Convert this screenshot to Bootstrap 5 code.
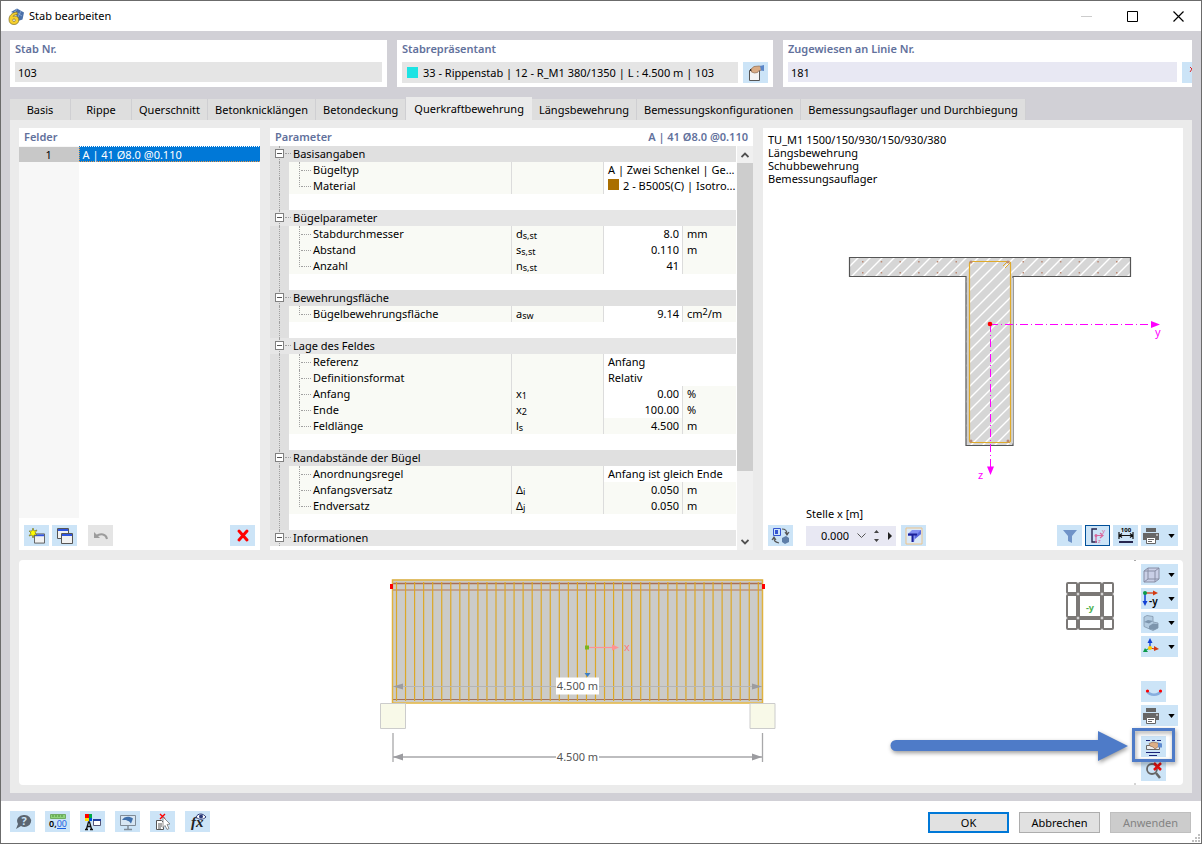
<!DOCTYPE html>
<html lang="de">
<head>
<meta charset="utf-8">
<meta name="viewport" content="width=device-width, initial-scale=1">
<title>Stab bearbeiten</title>
<link rel="stylesheet" href="https://cdn.jsdelivr.net/npm/bootstrap@5.3.0/dist/css/bootstrap.min.css">
<style>
:root { --frame:#d1d0d6; --page:#ebebeb; --tool:#cce4f7; --head:#62719c; --cell:#f9faf5; --rule:#dcdcdc; }
body { font-family:"Noto Sans","Open Sans",sans-serif; font-size:11px; line-height:16px; color:#000; background:#fff; }
.dialog { min-height:100vh; border:1px solid #6b6b6b; }
.titlebar { height:30px; padding-left:7px; }
.wbtn { width:46px; height:30px; border:0; background:none; padding:0; }
.frame { background:var(--frame); padding:9px 9px 8px; }
.groups { display:grid; grid-template-columns:377fr 376fr 409fr; gap:10px; }
.group { background:#fff; height:47px; padding:1px 5px 0; overflow:hidden; }
.group-row { display:flex; gap:5px; margin-top:5px; }
.caption { color:var(--head); font-weight:600; line-height:16px; display:block; }
.field { border:0; border-radius:0; background:#e5e5e5; height:20px; padding:0 3px; font-size:11px; color:#000; flex:1 1 auto; min-width:0; width:100%; }
.line-field { background:#e8e8f3; }
.field-box { background:#e5e5e5; height:21px; padding-left:5px; }
.tool { width:25px; height:21px; border:0; padding:0; background:var(--tool); display:inline-flex; align-items:center; justify-content:center; flex:none; }
.tool-drop { width:37px; justify-content:flex-start; padding-left:1px; gap:8px; }
.tool-cut { width:10px; justify-content:flex-end; }
.tool svg { flex:none; overflow:visible; }
.tool:disabled { background:#e5e5e5; }
.tool-on { outline:1px solid #00509a; outline-offset:-1px; }
.tabs { margin-top:10px; height:23px; }
.tab-item { border:0; border-right:1px solid #cfcfd2; background:#dedede; height:21px; padding:0 7px; min-width:61px; line-height:22px; white-space:nowrap; color:#000; }
.tab-item.active { background:var(--page); height:23px; border:0; line-height:24px; padding:0 8px; }
.content { background:var(--page); padding:8px 9px; gap:10px; }
.upper { display:grid; grid-template-columns:241fr 483fr 420fr; gap:10px; flex:422 1 422px; min-height:0; }
.lower { flex:225 1 225px; border-radius:4px; background:#fff; position:relative; }
.pane { background:#fff; min-width:0; min-height:0; overflow:hidden; }
.pane-head { height:18px; line-height:18px; padding:0 5px; }
.pane-tools { display:flex; align-items:flex-end; padding:0 5px 4px; gap:3px; }
.fields-list { flex:1 1 0; margin-bottom:7px; background:linear-gradient(90deg,#f7f7f7 60px,#fff 60px); }
.fields-list th { width:60px; background:#c8c8c8; font-weight:400; text-align:center; height:15px; line-height:15px; padding:0; }
.fields-list td { background:#0078d7; color:#fff; padding:0 0 0 3px; line-height:13px; border:1px dotted #e79746; border-top-color:#0078d7; border-right:0; }
.sheet { width:100%; table-layout:fixed; border-collapse:separate; border-spacing:0; }
.sheet td, .sheet th { padding:0; height:16px; line-height:16px; font-weight:400; white-space:nowrap; }
.sheet sub { font-size:9px; bottom:-1px; line-height:0; }
.sheet sup { font-size:9px; line-height:0; top:-3px; }
.sheet .gut { background:#dfdfdf; position:relative; }
.sheet .gut::before { content:""; position:absolute; left:9px; top:0; bottom:0; border-left:1px dotted #a0a0a0; }
.sheet .sec th { background:#e0e0e0; padding-left:4px; text-align:left; position:relative; }
.sheet .alt th, .sheet .alt .gut { background:#e6e6e6; }
.sheet .sec th::before { content:""; position:absolute; left:-4px; width:6px; top:7px; border-top:1px dotted #a0a0a0; }
.fold { position:absolute; left:5px; top:3px; width:9px; height:9px; border:1px solid #808080; background:#fff; padding:0; }
.fold::after { content:""; position:absolute; left:1px; right:1px; top:3px; height:1px; background:#555; }
.sheet .nm { background:var(--cell); padding-left:24px; position:relative; border-right:1px solid var(--rule); }
.sheet .nm::before { content:""; position:absolute; left:10px; top:0; height:16px; border-left:1px dotted #a0a0a0; }
.sheet .nm::after { content:""; position:absolute; left:12px; width:10px; top:8px; border-top:1px dotted #a0a0a0; }
.sheet .end .nm::before { height:9px; }
.sheet .sy { background:var(--cell); padding-left:4px; border-right:1px solid var(--rule); }
.sheet .va { text-align:right; padding-right:3px; border-right:1px solid var(--rule); }
.sheet .ro { background:var(--cell); }
.sheet .tx { padding-left:4px; }
.sheet .un { background:var(--cell); padding-left:4px; }
.swatch { display:inline-block; width:11px; height:11px; flex:none; }
.swatch-cyan { background:#1ce3e3; margin-right:2px; }
.swatch-brown { background:#aa6f00; margin-right:4px; }
.scroll { width:16px; background:#f0f0f0; margin-left:1px; flex:none; }
.scroll button { height:17px; width:16px; border:0; background:none; padding:0; display:flex; align-items:center; justify-content:center; }
.thumb { background:#cdcdcd; flex:308 1 0; }
.rest { flex:62 1 0; }
.legend-lines { line-height:13px; padding:5px 5px 0; }
.spin { background:#e8e8f3; height:20px; width:90px; }
.spin input { border:0; background:none; width:43px; text-align:right; padding:0; }
.spin button { border:0; background:none; padding:0; display:flex; }
.place { margin:0 2px 0 10px; }
.side { width:47px; padding:4px 0 4px 5px; gap:3px; }
.side .gap-before { margin-top:21px; }
.side .marked { margin-top:7px; position:relative; height:21px; width:25px; }
.ring { position:absolute; left:-9px; top:-8px; width:43px; height:34px; border:3px solid #4e7bc8; filter:drop-shadow(1px 2px 2px #0006); pointer-events:none; z-index:2; }
.pointer { position:absolute; right:53px; top:163px; width:244px; height:46px; pointer-events:none; }
.footer { height:42px; padding:10px 10px 0 9px; }
.push { width:81px; height:21px; border:1px solid #adadad; background:#e1e1e1; padding:0; line-height:19px; color:#000; }
.push-main { border:2px solid #0078d7; line-height:17px; }
.push:disabled { background:#ccc; border-color:#bfbfbf; color:#838383; }
svg { display:block; }
svg text { font-family:"Noto Sans","Open Sans",sans-serif; }
</style>
</head>
<body>
<svg width="0" height="0" class="position-absolute" aria-hidden="true">
  <symbol id="printer" viewBox="0 0 18 18"><path d="M4 1h10v4H4zM1 6h16v7h-3v-2H4v2H1z" fill="#666"/><path d="M4.500 10.500h9v6h-9z" fill="#fff" stroke="#666"/><path d="M6 12.500h6M6 14.500h4" stroke="#666"/><path d="M14 8h2" stroke="#fff"/></symbol>
  <symbol id="caret" viewBox="0 0 8 5"><path d="M0 0h8L4 5z" fill="#000"/></symbol>
  <symbol id="window" viewBox="0 0 12 11"><path d="M.500.500h11v10H.500z" fill="#f1f1f1" stroke="#555"/><path d="M1 1h10v2H1z" fill="#2f55e0"/></symbol>
</svg>

<div class="dialog d-flex flex-column">
  <header class="titlebar d-flex align-items-center">
    <svg width="17" height="17" viewBox="0 0 17 17"><path d="M3 4 9 .500l7 4-1.500 7L10 13 8 6z" fill="#4a70aa"/><path d="m6 3 8 5M9 1l-3 5M13 3l-3 6" stroke="#9bb8de" stroke-width=".7"/><path d="M9 4C3.500 4.500 1 8 1 11.500 1 14.800 3 16.500 6 16.500s4.800-1.800 4.800-4.600S9 8 6.700 8c-.6 0-1.200.1-1.700.4C5.600 7.300 7 6.600 9.500 6.400z" fill="#f7d02c" stroke="#7a6b2a" stroke-width=".7"/><circle cx="6" cy="12.200" r="1.300" fill="#fff" stroke="#7a6b2a" stroke-width=".7"/></svg>
    <span class="ms-1 flex-grow-1">Stab bearbeiten</span>
    <button class="wbtn" aria-label="Minimieren" disabled><svg class="mx-auto" width="11" height="11"><path d="M0 5.500h11" stroke="#ccc"/></svg></button>
    <button class="wbtn" aria-label="Maximieren"><svg class="mx-auto" width="11" height="11"><path d="M.500.500h10v10H.500z" fill="none" stroke="#000"/></svg></button>
    <button class="wbtn" aria-label="Schließen"><svg class="mx-auto" width="11" height="11"><path d="m.500.500 10 10m0-10-10 10" stroke="#000" stroke-width="1.200"/></svg></button>
  </header>

  <main class="frame d-flex flex-column flex-grow-1">
    <div class="groups">
      <div class="group">
        <label class="caption" for="nr">Stab Nr.</label>
        <div class="group-row"><input id="nr" class="field" value="103" readonly></div>
      </div>
      <div class="group">
        <label class="caption" for="rep">Stabrepräsentant</label>
        <div class="group-row">
          <div class="field-box d-flex align-items-center flex-grow-1"><span class="swatch swatch-cyan"></span><input id="rep" class="field" value="33 - Rippenstab | 12 - R_M1 380/1350 | L : 4.500 m | 103" readonly></div>
          <button class="tool" aria-label="Stabrepräsentant bearbeiten"><svg width="18" height="18"><path d="M2.500 6.500h10v10h-10z" fill="#f4f4f4" stroke="#555"/><path d="M3 5h4v2H3z" fill="#222"/><path d="M4 5 7 2.500l5-.5 2.500.500v3.500l-3 1-1 1.500-3 .500-3-1z" fill="#d9ab84" stroke="#7d5b40" stroke-width=".6"/><path d="m13 2 4-1v6l-3-.500z" fill="#5b86c8"/></svg></button>
        </div>
      </div>
      <div class="group pe-0">
        <label class="caption" for="linie">Zugewiesen an Linie Nr.</label>
        <div class="group-row">
          <input id="linie" class="field line-field" value="181" readonly>
          <button class="tool tool-cut" aria-label="Auswahl aufheben"><svg width="2" height="18"><path d="m0 3 2 2-2 3" fill="none" stroke="#e02020"/></svg></button>
        </div>
      </div>
    </div>

    <nav class="tabs d-flex align-items-end" role="tablist">
      <button class="tab-item" role="tab">Basis</button>
      <button class="tab-item" role="tab">Rippe</button>
      <button class="tab-item" role="tab">Querschnitt</button>
      <button class="tab-item" role="tab">Betonknicklängen</button>
      <button class="tab-item" role="tab">Betondeckung</button>
      <button class="tab-item active" role="tab" aria-selected="true">Querkraftbewehrung</button>
      <button class="tab-item" role="tab">Längsbewehrung</button>
      <button class="tab-item" role="tab">Bemessungskonfigurationen</button>
      <button class="tab-item" role="tab">Bemessungsauflager und Durchbiegung</button>
    </nav>

    <div class="content d-flex flex-column flex-grow-1">
      <div class="upper">
        <section class="pane d-flex flex-column">
          <div class="pane-head caption">Felder</div>
          <div class="fields-list"><table class="w-100"><tbody><tr><th>1</th><td>A | 41 Ø8.0 @0.110</td></tr></tbody></table></div>
          <div class="pane-tools">
            <button class="tool" aria-label="Neu"><svg width="18" height="18"><use href="#window" x="6" y="6" width="11" height="11"/><path d="m5 1 1 3 3-1-2 3 2 2-3 0-1 3-1-3-3 1 2-3-2-2 3 0z" fill="#fffb00" stroke="#77762b" stroke-width=".7"/></svg></button>
            <button class="tool" aria-label="Kopieren"><svg width="18" height="18"><use href="#window" x="1" y="1" width="12" height="11"/><use href="#window" x="5" y="6" width="12" height="11"/></svg></button>
            <button class="tool ms-2" disabled aria-label="Rückgängig"><svg width="18" height="18"><path d="M15 12c-1-5-6-6-11-3" fill="none" stroke="#9c9c9c" stroke-width="2"/><path d="M2 5v6h6z" fill="#9c9c9c"/></svg></button>
            <button class="tool ms-auto" aria-label="Löschen"><svg width="18" height="18"><path d="m5 4 8 9M13 4l-8 9" stroke="red" stroke-width="3" stroke-linecap="round"/></svg></button>
          </div>
        </section>

        <section class="pane d-flex flex-column">
          <div class="pane-head caption d-flex justify-content-between"><span>Parameter</span><span>A | 41 Ø8.0 @0.110</span></div>
          <div class="d-flex overflow-hidden" style="flex:1 1 0">
            <div class="flex-grow-1 overflow-hidden">
              <table class="sheet">
                <colgroup><col style="width:19px"><col><col style="width:92px"><col style="width:79px"><col style="width:53px"></colgroup>
                <tbody>
                <tr class="sec"><td class="gut"><button class="fold" aria-label="Einklappen"></button></td><th colspan="4">Basisangaben</th></tr>
                <tr><td class="gut"></td><td class="nm">Bügeltyp</td><td class="sy"></td><td class="tx" colspan="2">A | Zwei Schenkel | Ge...</td></tr>
                <tr class="end"><td class="gut"></td><td class="nm">Material</td><td class="sy"></td><td class="tx" colspan="2"><span class="swatch swatch-brown"></span>2 - B500S(C) | Isotro...</td></tr>
                <tr><td class="gut"></td><td colspan="4"></td></tr>
                <tr class="sec alt"><td class="gut"><button class="fold" aria-label="Einklappen"></button></td><th colspan="4">Bügelparameter</th></tr>
                <tr><td class="gut"></td><td class="nm">Stabdurchmesser</td><td class="sy">d<sub>s,st</sub></td><td class="va">8.0</td><td class="un">mm</td></tr>
                <tr><td class="gut"></td><td class="nm">Abstand</td><td class="sy">s<sub>s,st</sub></td><td class="va">0.110</td><td class="un">m</td></tr>
                <tr class="end"><td class="gut"></td><td class="nm">Anzahl</td><td class="sy">n<sub>s,st</sub></td><td class="va">41</td><td class="un"></td></tr>
                <tr><td class="gut"></td><td colspan="4"></td></tr>
                <tr class="sec"><td class="gut"><button class="fold" aria-label="Einklappen"></button></td><th colspan="4">Bewehrungsfläche</th></tr>
                <tr class="end"><td class="gut"></td><td class="nm">Bügelbewehrungsfläche</td><td class="sy">a<sub>sw</sub></td><td class="va">9.14</td><td class="un">cm<sup>2</sup>/m</td></tr>
                <tr><td class="gut"></td><td colspan="4"></td></tr>
                <tr class="sec alt"><td class="gut"><button class="fold" aria-label="Einklappen"></button></td><th colspan="4">Lage des Feldes</th></tr>
                <tr><td class="gut"></td><td class="nm">Referenz</td><td class="sy"></td><td class="tx" colspan="2">Anfang</td></tr>
                <tr><td class="gut"></td><td class="nm">Definitionsformat</td><td class="sy"></td><td class="tx" colspan="2">Relativ</td></tr>
                <tr><td class="gut"></td><td class="nm">Anfang</td><td class="sy">x<sub>1</sub></td><td class="va">0.00</td><td class="un">%</td></tr>
                <tr><td class="gut"></td><td class="nm">Ende</td><td class="sy">x<sub>2</sub></td><td class="va">100.00</td><td class="un">%</td></tr>
                <tr class="end"><td class="gut"></td><td class="nm">Feldlänge</td><td class="sy">l<sub>s</sub></td><td class="va ro">4.500</td><td class="un">m</td></tr>
                <tr><td class="gut"></td><td colspan="4"></td></tr>
                <tr class="sec"><td class="gut"><button class="fold" aria-label="Einklappen"></button></td><th colspan="4">Randabstände der Bügel</th></tr>
                <tr><td class="gut"></td><td class="nm">Anordnungsregel</td><td class="sy"></td><td class="tx" colspan="2">Anfang ist gleich Ende</td></tr>
                <tr><td class="gut"></td><td class="nm">Anfangsversatz</td><td class="sy">Δ<sub>i</sub></td><td class="va ro">0.050</td><td class="un">m</td></tr>
                <tr class="end"><td class="gut"></td><td class="nm">Endversatz</td><td class="sy">Δ<sub>j</sub></td><td class="va ro">0.050</td><td class="un">m</td></tr>
                <tr><td class="gut"></td><td colspan="4"></td></tr>
                <tr class="sec alt"><td class="gut"><button class="fold" aria-label="Einklappen"></button></td><th colspan="4">Informationen</th></tr>
                </tbody>
              </table>
            </div>
            <div class="scroll d-flex flex-column">
              <button aria-label="Nach oben"><svg width="8" height="6"><path d="m.500 5 3.500-3.500L7.500 5" fill="none" stroke="#505050" stroke-width="1.800"/></svg></button>
              <div class="thumb"></div><div class="rest"></div>
              <button aria-label="Nach unten"><svg width="8" height="6"><path d="M.500 1 4 4.500 7.500 1" fill="none" stroke="#505050" stroke-width="1.800"/></svg></button>
            </div>
          </div>
        </section>

        <section class="pane d-flex flex-column">
          <div class="legend-lines">TU_M1 1500/150/930/150/930/380<br>Längsbewehrung<br>Schubbewehrung<br>Bemessungsauflager</div>
          <svg class="w-100" style="flex:1 1 0;min-height:0" viewBox="763 185 420 321" role="img" aria-label="Querschnitt">
            <defs><pattern id="hatch" width="12" height="12" patternUnits="userSpaceOnUse"><path d="M-2 14 14-2M-2 2 2-2M10 14 14 10" stroke="#fff" stroke-width="1.400"/></pattern></defs>
            <path d="M849.500 257.500h281v19h-117.500V445.500h-47V276.500H849.500z" fill="#d6d6d6"/>
            <path d="M849.500 257.500h281v19h-117.500V445.500h-47V276.500H849.500z" fill="url(#hatch)" stroke="#555" stroke-width="1.200"/>
            <path d="M968 278V443.500M1012 278V443.500" stroke="#d0d0d0" stroke-width="2"/>
            <rect x="969.500" y="261.500" width="41" height="181" rx="2" fill="none" stroke="#dfaa2c" stroke-width="1.200"/>
            <path d="m1003 266 5-5M1005 268l6-6" stroke="#dfaa2c"/>
            <g id="bars" fill="#bb8a75"></g>
            <path d="M990 324.500h165M990.500 324v144" stroke="#f0f" stroke-dasharray="8 3 1 3" fill="none"/>
            <path d="m1151 321 9 3.500-9 3.500zM987 466.500h7l-3.500 8.500z" fill="#f0f"/>
            <circle cx="990" cy="324" r="2.300" fill="red"/>
            <g fill="#f0f" font-size="11"><text x="1155" y="336">y</text><text x="978" y="479">z</text></g>
          </svg>
          <div class="pane-tools">
            <button class="tool" aria-label="Ansicht umschalten"><svg width="18" height="18"><path d="M1.500 1.500h7v7h-7z" fill="none" stroke="#3454d1"/><path d="M3 3h3v4H3z" fill="#3454d1"/><path d="m10 11 4-2 3 2v4l-4 2-3-2z" fill="#5e7ea8"/><path d="M10 2c4 0 5 2 5 5m-2-2 2 3 2-3M2 11c0 3 1 4 5 5m-7-3 2-3 2 3" fill="none" stroke="#555" stroke-width="1.200"/></svg></button>
            <div class="place">
              <label for="stelle" class="d-block mb-1">Stelle x [m]</label>
              <div class="spin d-flex align-items-center">
                <input id="stelle" value="0.000">
                <button class="ms-2" aria-label="Liste"><svg width="9" height="6"><path d="m.500.500 4 4 4-4" fill="none" stroke="#555"/></svg></button>
                <button class="ms-2" aria-label="Schritt"><svg width="6" height="14"><path d="m0 4 2.500-3L5 4zM0 10l2.500 3L5 10z" fill="#444"/></svg></button>
                <button class="ms-2" aria-label="Weiter"><svg width="5" height="8"><path d="m0 0 4 4-4 4z" fill="#222"/></svg></button>
              </div>
            </div>
            <button class="tool" aria-label="Querschnitt anzeigen"><svg width="18" height="18"><path d="M1 1h16v16H1z" fill="#dbe9f7" stroke="#ecc38a"/><path d="m3 7 4-4h9v4l-6 4-1 4H7V9H3z" fill="#8290f2"/><path d="m12 7 4-4v4l-6 5V8z" fill="#5b69dc"/><path d="M3 7.500h9M7.500 8v7" stroke="#1b2098" stroke-width="2"/></svg></button>
              <button class="tool ms-auto" aria-label="Filter"><svg width="18" height="18"><path d="M2 3h14l-5 6v7l-4-2V9z" fill="#6f93c8"/></svg></button>
              <button class="tool tool-on" aria-label="Achsen"><svg width="18" height="18"><path d="M8 2H3v13h5" fill="none" stroke="#26264f" stroke-width="1.400"/><path d="M6 8.500h7M7 8v8M11 6l3 2.500-3 2.500" fill="none" stroke="#d9659b" stroke-width="1.200"/><circle cx="7" cy="8.500" r="1.500" fill="#d9659b"/><text x="13" y="6" font-size="6" fill="#d9659b">y</text><text x="9" y="16" font-size="6" fill="#d9659b">z</text></svg></button>
              <button class="tool" aria-label="Maße"><svg width="18" height="18"><text x="9" y="5" font-size="6" font-weight="700" text-anchor="middle">100</text><path d="M2 5v7M16 5v7M2 8.500h14M5 6.500 2.500 8.500 5 10.500M13 6.500l2.500 2-2.500 2" stroke="#111" fill="none" stroke-width="1.200"/><path d="M2 14h14v2H2z" fill="#26264f"/></svg></button>
              <button class="tool tool-drop" aria-label="Drucken"><svg width="18" height="18"><use href="#printer"/></svg><svg width="7" height="4"><use href="#caret"/></svg></button>
          </div>
        </section>
      </div>

      <section class="lower d-flex">
        <svg class="flex-grow-1 h-100" style="width:0" viewBox="19 560 1117 225" role="img" aria-label="Stabansicht">
          <path d="M392.500 579.500h370v123h-370z" fill="#cbcbc9"/>
          <path d="M393 583.500h370" stroke="#aa6f52" stroke-width="1.500"/><path d="M393 590h370" stroke="#c3a18c" stroke-width="1.800"/><path d="M393 699.500h370" stroke="#a3705a"/>
          <g id="stirrups" stroke="#dca827" stroke-width="1.200"></g>
          <path d="M392.500 703V580h370v123z" fill="none" stroke="#e0b23f" stroke-width="1.500"/>
          <path d="M390 584h3v5h-3zM762 584h3v5h-3z" fill="red"/>
          <path d="M393 686.500h369" stroke="#b5b5b5"/><path d="m393 686.500 10-3v6zM762 686.500l-10-3v6z" fill="#9c9ca0"/>
          <path d="M587 647.500h27" stroke="#ff9292" stroke-width="1.200"/><path d="m612 644.500 7 3-7 3z" fill="#ff9292"/><path d="M585 645.500h4v4h-4z" fill="#79b51e"/><path d="m584.500 673 3 4 3-4z" fill="#3b7ec4"/><text x="624" y="651" font-size="11" fill="#f87f7f">x</text>
          <path d="M556 677.500h43v17h-43z" fill="#fff"/>
          <path d="M380.500 703.500h25v25h-25zM750 703.500h25v25h-25z" fill="#f8f9e8" stroke="#ccc"/>
          <path d="M393 757h369M393 733v29M762.500 733v29" stroke="#a8a8aa" stroke-width="1.300"/><path d="m393 757 10-3.500v7zM762 757l-10-3.500v7z" fill="#9c9ca0"/>
          <path d="M556 750h43v14h-43z" fill="#fff"/>
          <g font-size="11" fill="#555" text-anchor="middle"><text x="577.500" y="690">4.500 m</text><text x="577.500" y="761">4.500 m</text></g>
          <g fill="none" stroke="#7b7876" stroke-width="2"><rect x="1067" y="583" width="10" height="10" rx="1"/><rect x="1079" y="583" width="22" height="10" rx="1"/><rect x="1103" y="583" width="10" height="10" rx="1"/><rect x="1067" y="595" width="10" height="22" rx="1"/><rect x="1079" y="595" width="22" height="22" rx="1"/><rect x="1103" y="595" width="10" height="22" rx="1"/><rect x="1067" y="619" width="10" height="10" rx="1"/><rect x="1079" y="619" width="22" height="10" rx="1"/><rect x="1103" y="619" width="10" height="10" rx="1"/></g>
          <text x="1090" y="611" font-size="9" font-weight="700" fill="#4caf50" text-anchor="middle">-y</text>
          <path d="M1134 560.500h3M1134 784h3" stroke="#aaa"/>
        </svg>
        <svg class="pointer" viewBox="0 0 244 46"><path d="M10 17H212V8l30 15-30 15V28H10a5 5 0 0 1 0-11z" fill="#4e7bc8" style="filter:drop-shadow(1px 2px 2px #0006)"/></svg>
        <div class="side d-flex flex-column align-items-start">
          <button class="tool tool-drop" aria-label="Darstellung"><svg width="18" height="18"><path d="M2 5 6 2h11v11l-4 3H2z" fill="#c9cfe6" stroke="#888ea5"/><path d="M2 5h11v11M13 5l4-3M6 2v11h11M6 13l-4 3" fill="none" stroke="#888ea5"/></svg><svg width="7" height="4"><use href="#caret"/></svg></button>
          <button class="tool tool-drop" aria-label="Blickrichtung"><svg width="18" height="18"><path d="M3 3h11" stroke="#d43b12" stroke-width="1.300"/><path d="m11 .500 5 2.500-5 2.500z" fill="#d43b12"/><path d="M3 3v10" stroke="#1240d4" stroke-width="1.500"/><path d="M.500 11h5L3 16z" fill="#1240d4"/><circle cx="3" cy="3" r="2" fill="#0a9a4a"/><text x="7" y="15" font-size="10" font-weight="600">-y</text></svg><svg width="7" height="4"><use href="#caret"/></svg></button>
          <button class="tool tool-drop" aria-label="Ausschnitt"><svg width="18" height="18"><path d="m2 3 3-1.500 6 1V8l5 1v5l-5 2.500-9-4z" fill="#b3cbe0" stroke="#8196ab" stroke-width=".8"/><path d="m2 8 4-2 5 1-4 2.500zM7 12l4-2.500 5 .500v4l-4 2-5-1z" fill="#7d95ad"/></svg><svg width="7" height="4"><use href="#caret"/></svg></button>
          <button class="tool tool-drop" aria-label="Achsensystem"><svg width="18" height="18"><path d="M8 10V3" stroke="#1240d4" stroke-width="1.300"/><path d="M5.500 5 8 0l2.500 5z" fill="#1240d4"/><path d="m8 10 5 1" stroke="#d43b12"/><path d="m12 8 5 3-5 2z" fill="#d43b12"/><path d="m8 10-4 2" stroke="#0a9a4a"/><path d="m1 14 2-4 3 4z" fill="#0a9a4a"/><circle cx="8" cy="10" r="2" fill="#ffcf00"/></svg><svg width="7" height="4"><use href="#caret"/></svg></button>
          <button class="tool gap-before" aria-label="Verformung"><svg width="18" height="18"><path d="M2 8c3 5 11 5 14 0" fill="none" stroke="#86aede" stroke-width="2.500"/><circle cx="2.500" cy="8" r="1.600" fill="red"/><circle cx="15.500" cy="8" r="1.600" fill="red"/></svg></button>
          <button class="tool tool-drop" aria-label="Drucken"><svg width="18" height="18"><use href="#printer"/></svg><svg width="7" height="4"><use href="#caret"/></svg></button>
          <div class="marked"><button class="tool" aria-label="Bewehrung bearbeiten"><svg width="18" height="18"><path d="M1 2.500h4M7 2.500h3M12 2.500h4M1 14.500h14M4 17.500h8" stroke="#1a2378" stroke-width="1.200"/><path d="M1.500 7.500h13v4h-13z" fill="#eee" stroke="#666"/><path d="m4 5.500 4-1.500 5 1 1 3-4 3-2-2-3-1z" fill="#dcae86" stroke="#85614a" stroke-width=".6"/><path d="m13 4.500 4 1v4h-4z" fill="#5f8bd0"/></svg></button><span class="ring"></span></div>
          <button class="tool" aria-label="Zoom zurücksetzen"><svg width="18" height="18"><circle cx="7" cy="7" r="5" fill="none" stroke="#666" stroke-width="1.800"/><path d="m11 11 4 5" stroke="#666" stroke-width="2.500"/><path d="m9 1 7 7M16 1 9 8" stroke="#e01010" stroke-width="2.500"/></svg></button>
        </div>
      </section>
    </div>
  </main>

  <footer class="footer d-flex">
    <div class="d-flex" style="gap:10px">
      <button class="tool" aria-label="Hilfe"><svg width="18" height="18"><path d="M10 2a6.500 6 0 1 1-3 11l-5 3 2-5a6.500 6 0 0 1 6-9z" fill="#5b6672"/><text x="10" y="12" font-size="11" font-weight="700" fill="#cce4f7" text-anchor="middle">?</text></svg></button>
      <button class="tool" aria-label="Einheiten"><svg width="20" height="18"><path d="M2.500 1.500h15v4h-15z" fill="#8fd47c" stroke="#70ab62"/><path d="M5 2v2M8 2v2M11 2v2M14 2v2" stroke="#4d8e3d"/><text x="1" y="14" font-size="9" font-weight="600">0,<tspan fill="#1b5fe0" font-weight="400">00</tspan></text><path d="M9 15.500h9" stroke="#1b5fe0"/></svg></button>
      <button class="tool" aria-label="Farben"><svg width="18" height="18"><path d="M1 1h4v4H1z" fill="red"/><path d="M5 1h3v4H5z" fill="#0a4"/><path d="M1 5h4v3H1z" fill="#ffe000"/><path d="M5 5h3v3H5z" fill="#05d"/><path d="M1 16.500h3M6 16.500h3M2.500 16 4.500 9h1l2 7M3.500 13.500h3" fill="none" stroke="#111" stroke-width="1.300"/><path d="M9.500 6.500h7v6h-7z" fill="#fff" stroke="#557"/><path d="M9 6h8v2H9z" fill="#24409c"/></svg></button>
      <button class="tool" aria-label="Anzeige"><svg width="18" height="18"><path d="M1.500 2.500h15v10h-15z" fill="#d7e6f3" stroke="#7f8b97"/><path d="M9 13v3M5 16.500h8" stroke="#7f8b97" stroke-width="1.500"/><path d="M3 7c2-3.500 7-4.500 11-1.500l-2 5c-1-1-1.500-2.500-3-2.500L7 7z" fill="#3f70ac"/></svg></button>
      <button class="tool" aria-label="Auswahl"><svg width="18" height="18"><path d="M2.500 7.500h5l2 2v7h-7z" fill="#fff" stroke="#555"/><path d="M4 11h4M4 13h4M4 15h3" stroke="#555"/><path d="m6 1 5 5m0-5L6 6" stroke="red" stroke-width="1.400"/><path d="m9 4 7 7-3 .500 2 4-2 1-2-4-2 2z" fill="#fff" stroke="#777" stroke-width=".8"/></svg></button>
      <button class="tool" aria-label="Formel"><svg width="20" height="18"><text x="3" y="14" font-size="15" font-style="italic" font-weight="700" style="font-family:'Liberation Serif',serif" fill="#222">fx</text><path d="M8 4c2-4 7-4 10 0-3 3-7 3-10 0z" fill="#fff" stroke="#2b3a78"/><circle cx="13" cy="3.500" r="2" fill="#2b3a78"/></svg></button>
    </div>
    <div class="ms-auto d-flex" style="gap:10px;padding-top:1px">
      <button class="push push-main">OK</button>
      <button class="push">Abbrechen</button>
      <button class="push" disabled>Anwenden</button>
    </div>
    <svg class="position-absolute" style="right:2px;bottom:2px" width="8" height="8" aria-hidden="true"><path d="M6 0h2v2H6zM3 3h2v2H3zM6 3h2v2H6zM0 6h2v2H0zM3 6h2v2H3zM6 6h2v2H6z" fill="#bfbfbf"/></svg>
  </footer>
</div>
<script src="https://cdn.jsdelivr.net/npm/bootstrap@5.3.0/dist/js/bootstrap.bundle.min.js"></script>
<script>
const NS = 'http://www.w3.org/2000/svg';
function add(parent, tag, attrs) {
  const el = document.createElementNS(NS, tag);
  for (const k in attrs) el.setAttribute(k, attrs[k]);
  parent.appendChild(el);
}
// 41 stirrups evenly spaced between both edge offsets
const stirrups = document.getElementById('stirrups');
for (let i = 0; i <= 40; i++) {
  const x = 396.5 + i * 361.8 / 40;
  add(stirrups, 'line', { x1: x, x2: x, y1: 582, y2: 701 });
}
// longitudinal bars in flange and web
const bars = document.getElementById('bars');
for (let i = 0; i < 6; i++) for (const y of [261, 272]) {
  add(bars, 'rect', { x: 862 + i * 18.7, y: y, width: 1.5, height: 1.5 });
  add(bars, 'rect', { x: 1022.5 + i * 18.7, y: y, width: 1.5, height: 1.5 });
}
for (const x of [971, 1008]) for (const y of [262, 441]) add(bars, 'circle', { cx: x, cy: y, r: 1.5 });
</script>
</body>
</html>
